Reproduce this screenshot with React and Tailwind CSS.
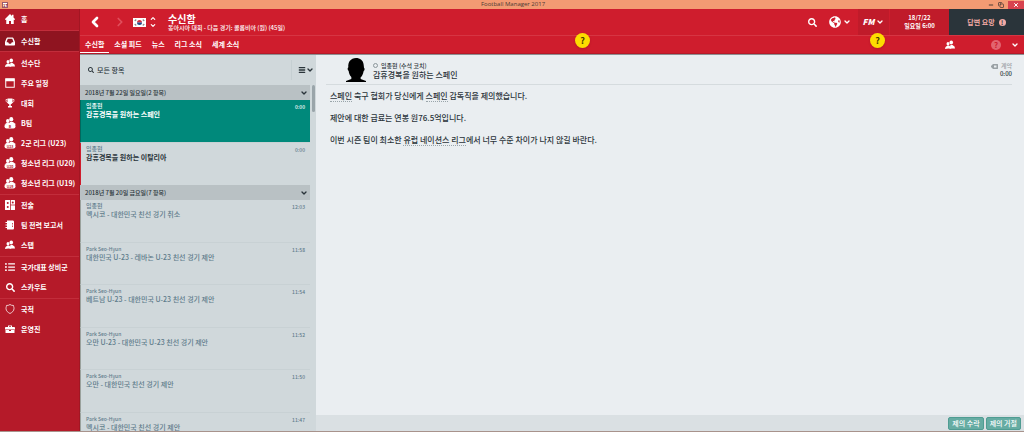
import React, { useState } from "react";
import { FaSearch, FaListUl, FaGlobeAmericas } from "react-icons/fa";
import { ChevronDown, ChevronUp, ChevronLeft, ChevronRight, Minus, X, Copy, Menu } from "lucide-react";

const HomeIcon = () => (
  <svg viewBox="0 0 20 20" className="w-2.5 h-2.5" fill="currentColor">
    <path d="M10 0l4 4V1.500h3V7l3 3v1.500h-2.500V20H12v-6H8v6H2.500v-8.500H0V10z" />
  </svg>
);

const InboxIcon = () => (
  <svg viewBox="0 0 20 18" className="w-2.5 h-[9px]" fill="currentColor" fillRule="evenodd">
    <path d="M5 1h10c1 0 1.500.5 2 1.500L20 10v5.500c0 1-.5 1.500-1.500 1.500h-17C.5 17 0 16.500 0 15.500V10l3-7.500C3.500 1.500 4 1 5 1zM5.500 3.500L3 10.500h3.500c.5 2 1.500 3 3.500 3s3-1 3.500-3H17l-2.500-7z" />
  </svg>
);

const TrophyIcon = () => (
  <svg viewBox="0 0 20 20" className="w-2.5 h-2.5" fill="currentColor">
    <path d="M5 1h10v7c0 2.500-1.500 4-3.500 4.500V16H14v3H6v-3h2.500v-3.500C6.500 12 5 10.500 5 8z" />
    <path d="M5 3H2c0 4 1 6 4 6.500M15 3h3c0 4-1 6-4 6.500" fill="none" stroke="currentColor" strokeWidth="1.500" />
  </svg>
);

const PeopleIcon = ({ className = "w-2.5 h-2.5" }) => (
  <svg viewBox="0 0 20 20" className={className} fill="currentColor">
    <ellipse cx="12.500" cy="5" rx="3.600" ry="4" />
    <ellipse cx="6" cy="7.500" rx="3" ry="3.400" />
    <path d="M11 10h4l4 3 1 4h-7l-3-4z" />
    <path d="M0 18l1-4 4-3h3l4 3 1 4-6-1z" />
  </svg>
);

const SquadIcon = ({ tag }) => (
  <svg viewBox="0 0 24 24" className="w-3 h-3" fill="currentColor">
    <ellipse cx="14.500" cy="4.500" rx="4" ry="4.500" />
    <ellipse cx="7.500" cy="8" rx="3.500" ry="4" />
    <path d="M12 10h6l4 3 1 3H8z" />
    <path d="M1 15l4-3h6l4 3z" />
    <rect x="1" y="14" width="22" height="9" rx="4" />
    <text x="12" y="21" textAnchor="middle" fontSize="7" fontWeight="700" fill="#b51a29">{tag}</text>
  </svg>
);

const CalendarIcon = () => (
  <svg viewBox="0 0 20 20" className="w-2.5 h-2.5" fill="none" stroke="currentColor">
    <rect x="1.500" y="1.500" width="17" height="17" strokeWidth="2" />
    <path d="M1 4h18" strokeWidth="5" />
  </svg>
);

const TacticsIcon = () => (
  <svg viewBox="0 0 20 20" className="w-2.5 h-2.5">
    <rect width="20" height="20" rx="1" fill="currentColor" />
    <path d="M11 0v20M11 10h9" stroke="#b51a29" strokeWidth="1.500" />
    <circle cx="5.500" cy="6" r="2" fill="#b51a29" />
    <circle cx="5.500" cy="14" r="2" fill="#b51a29" />
    <circle cx="15.500" cy="5" r="2" fill="#b51a29" />
  </svg>
);

const NotebookIcon = () => (
  <svg viewBox="0 0 20 20" className="w-2.5 h-2.5" fill="currentColor">
    <path d="M4 1h11c2 0 3 1 3 3v12c0 2-1 3-3 3H4v-3H1v-2h3v-3H1V9h3V6H1V4h3z" />
    <path d="M15 6v3M15 11v3" stroke="#b51a29" strokeWidth="1.500" />
  </svg>
);

const ShieldIcon = () => (
  <svg viewBox="0 0 20 20" className="w-2.5 h-2.5" fill="none" stroke="currentColor" strokeWidth="1.500">
    <path d="M10 1l3 1.500L17 3c0 2 1 3 1 6 0 5-4 8-8 10-4-2-8-5-8-10 0-3 1-4 1-6l4-.5z" />
  </svg>
);

const BriefcaseIcon = () => (
  <svg viewBox="0 0 20 16" className="w-2.5 h-2" fill="currentColor">
    <path d="M6 4V1h8v3h4c1 0 2 .5 2 2v3H0V6c0-1.500 1-2 2-2zM8 4h4V2.500H8z" fillRule="evenodd" />
    <path d="M1 10h7v2h4v-2h7v6H1z" />
  </svg>
);

const TagIcon = () => (
  <svg viewBox="0 0 14 10" className="w-[7px] h-[5px]" fill="currentColor" fillRule="evenodd">
    <path d="M4 0h9c.6 0 1 .4 1 1v8c0 .6-.4 1-1 1H4L0 6V4zM6 3v4h5V3z" />
  </svg>
);

const FlagIcon = () => (
  <svg viewBox="0 0 26 18" className="w-[13px] h-[9px]">
    <rect width="26" height="18" fill="#fff" />
    <path d="M8 9a5 5 0 0 1 10 0z" fill="#d22f3f" />
    <path d="M8 9a5 5 0 0 0 10 0z" fill="#204a8c" />
    <path d="M3 5l3-2M4 6l3-2M20 3l3 2M19 4l3 2M3 13l3 2M4 12l3 2M20 15l3-2M19 14l3-2" stroke="#222" />
  </svg>
);

const Portrait = () => (
  <svg viewBox="0 0 60 72" className="w-5 h-6" fill="#000">
    <path d="M30 0C42 0 52 7 53 20l1 9c3 2 2 8-1 10-2 10-5 16-9 19v5l16 6v3H0v-3l16-6v-6c-5-5-7-11-8-18-4-3-4-9-1-11C5 12 14 1 30 0z" />
  </svg>
);

const navGroups = [
  [{ label: "홈", icon: <HomeIcon /> }],
  [{ label: "수신함", icon: <InboxIcon />, active: true }],
  [
    { label: "선수단", icon: <PeopleIcon /> },
    { label: "주요 일정", icon: <CalendarIcon /> },
    { label: "대회", icon: <TrophyIcon /> },
    { label: "B팀", icon: <SquadIcon tag="B" /> },
    { label: "2군 리그 (U23)", icon: <SquadIcon tag="U23" /> },
    { label: "청소년 리그 (U20)", icon: <SquadIcon tag="U20" /> },
    { label: "청소년 리그 (U19)", icon: <SquadIcon tag="U19" /> },
  ],
  [
    { label: "전술", icon: <TacticsIcon /> },
    { label: "팀 전력 보고서", icon: <NotebookIcon /> },
    { label: "스탭", icon: <PeopleIcon /> },
  ],
  [
    { label: "국가대표 상비군", icon: <FaListUl className="w-2.5 h-2.5" /> },
    { label: "스카우트", icon: <FaSearch className="w-[9px] h-[9px]" /> },
  ],
  [
    { label: "국적", icon: <ShieldIcon /> },
    { label: "운영진", icon: <BriefcaseIcon /> },
  ],
];

const tabs = ["수신함", "소셜 피드", "뉴스", "리그 소식", "세계 소식"];

const messageGroups = [
  {
    date: "2018년 7월 22일 일요일(2 항목)",
    items: [
      { from: "임종현", title: "감휴경복을 원하는 스페인", time: "0:00", unread: true },
      { from: "임종현", title: "감휴경복을 원하는 이탈리아", time: "0:00", unread: true },
    ],
  },
  {
    date: "2018년 7월 20일 금요일(7 항목)",
    items: [
      { from: "임종현", title: "멕시코 - 대한민국 친선 경기 취소", time: "12:03" },
      { from: "Park Seo-Hyun", title: "대한민국 U-23 - 레바논 U-23 친선 경기 제안", time: "11:58" },
      { from: "Park Seo-Hyun", title: "베트남 U-23 - 대한민국 U-23 친선 경기 제안", time: "11:54" },
      { from: "Park Seo-Hyun", title: "오만 U-23 - 대한민국 U-23 친선 경기 제안", time: "11:52" },
      { from: "Park Seo-Hyun", title: "오만 - 대한민국 친선 경기 제안", time: "11:50" },
      { from: "Park Seo-Hyun", title: "멕시코 - 대한민국 친선 경기 제안", time: "11:47" },
    ],
  },
];

const Sidebar = () => (
  <nav className="w-20 shrink-0 bg-[#b51a29] text-white border-r border-[#a31623]">
    {navGroups.map((group, i) => (
      <div key={i} className={`border-b border-[#c22d3b] last:border-b-0 ${group[0].active ? "bg-[#8f1420] mb-px" : i === 0 ? "pb-px" : "pb-px"}`}>
        {group.map((item) => (
          <a key={item.label} href="#" className="flex items-center h-5 text-[7px] font-bold whitespace-nowrap">
            <span className="w-5 flex justify-center shrink-0">{item.icon}</span>
            <span className="pl-px pt-px">{item.label}</span>
          </a>
        ))}
      </div>
    ))}
  </nav>
);

const HelpBadge = ({ className }) => (
  <button className={`absolute top-6 w-[15px] h-[15px] rounded-full bg-[#fddc00] text-[#4a3c00] text-[9px] leading-[15px] font-bold text-center shadow ${className}`}>?</button>
);

const Header = ({ tab, setTab }) => (
  <header className="shrink-0 bg-[#cf1d2d] text-white border-b border-[#8d8f92]">
    <div className="h-[27px] flex border-b border-[#d63543]">
      <div className="flex items-center flex-1 pl-[7px]">
        <button aria-label="뒤로"><ChevronLeft className="w-4 h-4" strokeWidth={4} /></button>
        <button aria-label="앞으로" className="ml-2.5 text-[#e04f5c]"><ChevronRight className="w-3.5 h-3.5" strokeWidth={3} /></button>
        <span className="ml-1.5"><FlagIcon /></span>
        <button aria-label="팀 전환" className="ml-0.5 flex flex-col">
          <ChevronUp className="w-2.5 h-[7px]" strokeWidth={4} />
          <ChevronDown className="w-2.5 h-[7px]" strokeWidth={4} />
        </button>
        <div className="ml-2.5 whitespace-nowrap">
          <h1 className="text-[10px] leading-[11px] font-bold">수신함</h1>
          <p className="text-[6px] leading-[8px] font-medium">동아시아 대회 - 다음 경기: 콜롬비아 (원) (45일)</p>
        </div>
      </div>
      <button aria-label="검색" className="px-2"><FaSearch className="w-[9px] h-[9px]" /></button>
      <button aria-label="세계" className="pl-1 pr-[7px] flex items-center gap-0.5">
        <FaGlobeAmericas className="w-3 h-3" />
        <ChevronDown className="w-2 h-2" strokeWidth={4} />
      </button>
      <button className="w-8 bg-[#c01b2a] flex items-center justify-center gap-0.5 border-r border-[#cf1d2d]">
        <span className="text-[8px] font-black italic">FM</span>
        <ChevronDown className="w-2 h-2" strokeWidth={4} />
      </button>
      <div className="w-[59px] bg-[#c01b2a] flex flex-col items-center justify-center text-[6px] leading-[8px] font-bold">
        <span>18/7/22</span>
        <span>일요일 6:00</span>
      </div>
      <button className="w-[75px] bg-[#2a343a] text-[#f2aaa5] flex items-center justify-center gap-1 text-[7px] font-bold">
        답변 요망
        <span className="w-[7px] h-[7px] rounded-full bg-[#f2aaa5] text-[#2a343a] text-[6px] leading-[7px]">!</span>
      </button>
    </div>
    <div className="h-[18px] flex items-stretch justify-between border-b border-[#b51a29]">
      <div className="flex">
        {tabs.map((t) => (
          <button key={t} onClick={() => setTab(t)}
            className={`px-[5px] border-b text-[7px] font-bold whitespace-nowrap ${t === tab ? "border-white" : "border-transparent"}`}>
            {t}
          </button>
        ))}
      </div>
      <div className="flex items-center pr-[5px]">
        <PeopleIcon />
        <button aria-label="도움말" className="ml-9 w-2.5 h-2.5 rounded-full bg-[#e26470] text-[#cf1d2d] text-[8px] leading-[10px] font-bold">?</button>
        <ChevronDown className="ml-2.5 w-2 h-2" strokeWidth={4} />
      </div>
    </div>
  </header>
);

const MessageRow = ({ item, selected, onClick }) => {
  const edge = selected ? "border-l-[#00695e]" : item.unread ? "border-l-[#cf1d2d]" : "border-l-[#9aa19c]";
  return (
    <li className={`h-[43px] even:h-[42px] border-b last:border-b-0 border-[#c8d1d4] border-l ${edge}`}>
      <button onClick={onClick}
        className={`w-full h-full flex justify-between items-start pt-0.5 px-[5px] text-left ${selected ? "bg-[#00897b] text-white" : "text-[#5f7c8b]"}`}>
        <span className="flex flex-col whitespace-nowrap">
          <span className={`leading-[8px] font-medium ${item.from.startsWith("Park") ? "text-[5px]" : "text-[6px]"}`}>{item.from}</span>
          <span className={`text-[7px] leading-[9px] ${item.unread ? "font-bold" : "font-medium"} ${item.unread && !selected ? "text-[#2a343a]" : ""}`}>{item.title}</span>
        </span>
        <span className="text-[5px] leading-[9px] font-medium">{item.time}</span>
      </button>
    </li>
  );
};

const App = () => {
  const [tab, setTab] = useState("수신함");
  const [selected, setSelected] = useState("0-0");

  return (
    <div className="h-screen flex flex-col overflow-hidden font-['Noto_Sans_CJK_KR',sans-serif] bg-[#eaeef1] text-[#2a343a] border-b border-[#a8938c]">
      <div className="h-[9px] shrink-0 bg-[#f39b73] flex items-center justify-between pl-0.5 text-[#4b3a34]">
        <span className="flex-1"><span className="block w-[6px] h-[6px] bg-white border border-[#9a5a6a] text-[4px] leading-[4px] font-bold text-[#8f1420]">17</span></span>
        <span className="font-['Open_Sans',sans-serif] text-[6px] leading-[9px]">Football Manager 2017</span>
        <span className="flex-1 flex justify-end items-center gap-1">
          <Minus className="w-[6px] h-[6px]" strokeWidth={4} />
          <Copy className="w-[6px] h-[6px]" strokeWidth={3} />
          <span className="w-4 h-2 bg-[#d8434f] text-white flex items-center justify-center"><X className="w-[6px] h-[6px]" strokeWidth={4} /></span>
        </span>
      </div>

      <div className="flex flex-1 min-h-0">
        <Sidebar />
        <div className="relative flex-1 min-w-0 flex flex-col">
          <Header tab={tab} setTab={setTab} />
          <HelpBadge className="left-[495px]" />
          <HelpBadge className="right-[139px]" />

          <div className="flex flex-1 min-h-0">
            <section className="w-[236px] shrink-0 bg-[#d0d8db] flex flex-col min-h-0">
              <div className="h-[30px] shrink-0 flex items-center justify-between pl-2 pr-0.5">
                <span className="flex items-center gap-[3px] text-[7px] font-medium"><FaSearch className="w-[6px] h-[6px]" />모든 항목</span>
                <button aria-label="정렬" className="h-5 pl-1.5 border-l border-[#c5cfd2] flex items-center">
                  <Menu className="w-2 h-2" strokeWidth={4} />
                  <ChevronDown className="w-2 h-2" strokeWidth={4} />
                </button>
              </div>
              <div className="flex flex-1 min-h-0">
                <div className="flex-1 overflow-hidden">
                  {messageGroups.map((group, g) => (
                    <div key={group.date}>
                      <h2 className="h-[15px] flex items-center justify-between bg-[#b9c1c4] pl-[5px] pr-0.5 text-[6px] font-medium">
                        {group.date}
                        <ChevronDown className="w-2 h-2" strokeWidth={4} />
                      </h2>
                      <ul>
                        {group.items.map((item, i) => (
                          <MessageRow key={item.title} item={item} selected={selected === `${g}-${i}`} onClick={() => setSelected(`${g}-${i}`)} />
                        ))}
                      </ul>
                    </div>
                  ))}
                </div>
                <div className="w-1.5 flex justify-center"><div className="w-[3px] h-[27px] rounded-full bg-[#9aa5aa]" /></div>
              </div>
            </section>

            <main className="flex-1 min-w-0 flex flex-col">
              <div className="h-[30px] shrink-0 flex items-center ml-2.5 mr-3 pl-5 pt-px border-b border-[#d5dbde]">
                <Portrait />
                <div className="flex-1 ml-[7px]">
                  <p className="text-[6px] leading-[8px] font-medium flex items-center gap-[3px]"><span className="w-[5px] h-[5px] rounded-full border border-[#8b969b]" />임종현 (수석 코치)</p>
                  <h2 className="text-[8px] leading-[9px] font-medium">감휴경복을 원하는 스페인</h2>
                </div>
                <div className="text-[6px] leading-[8px] font-medium flex flex-col items-end">
                  <p className="flex items-center gap-[3px] text-[#9aa1a5]"><TagIcon />계약</p>
                  <p>0:00</p>
                </div>
              </div>
              <div className="flex-1 px-3.5 pt-1.5 text-[8px] leading-[10px] font-medium space-y-3">
                <p><a href="#" className="border-b border-dotted border-[#9aa5aa]">스페인</a> 축구 협회가 당신에게 <a href="#" className="border-b border-dotted border-[#9aa5aa]">스페인</a> 감독직을 제의했습니다.</p>
                <p>제안에 대한 급료는 연봉 원76.5억입니다.</p>
                <p>이번 시즌 팀이 최소한 <a href="#" className="border-b border-dotted border-[#9aa5aa]">유럽 네이션스 리그</a>에서 너무 수준 차이가 나지 않길 바란다.</p>
              </div>
              <footer className="h-4 shrink-0 flex items-center justify-end gap-0.5 pr-[3px] bg-[#dae0e3]">
                {["제의 수락", "제의 거절"].map((label) => (
                  <button key={label} className="h-[13px] px-[3px] rounded-xs border border-[#4f9c92] bg-[#66aca3] text-white text-[7px] leading-[11px] font-medium">{label}</button>
                ))}
              </footer>
            </main>
          </div>
        </div>
      </div>
    </div>
  );
};

export default App;
